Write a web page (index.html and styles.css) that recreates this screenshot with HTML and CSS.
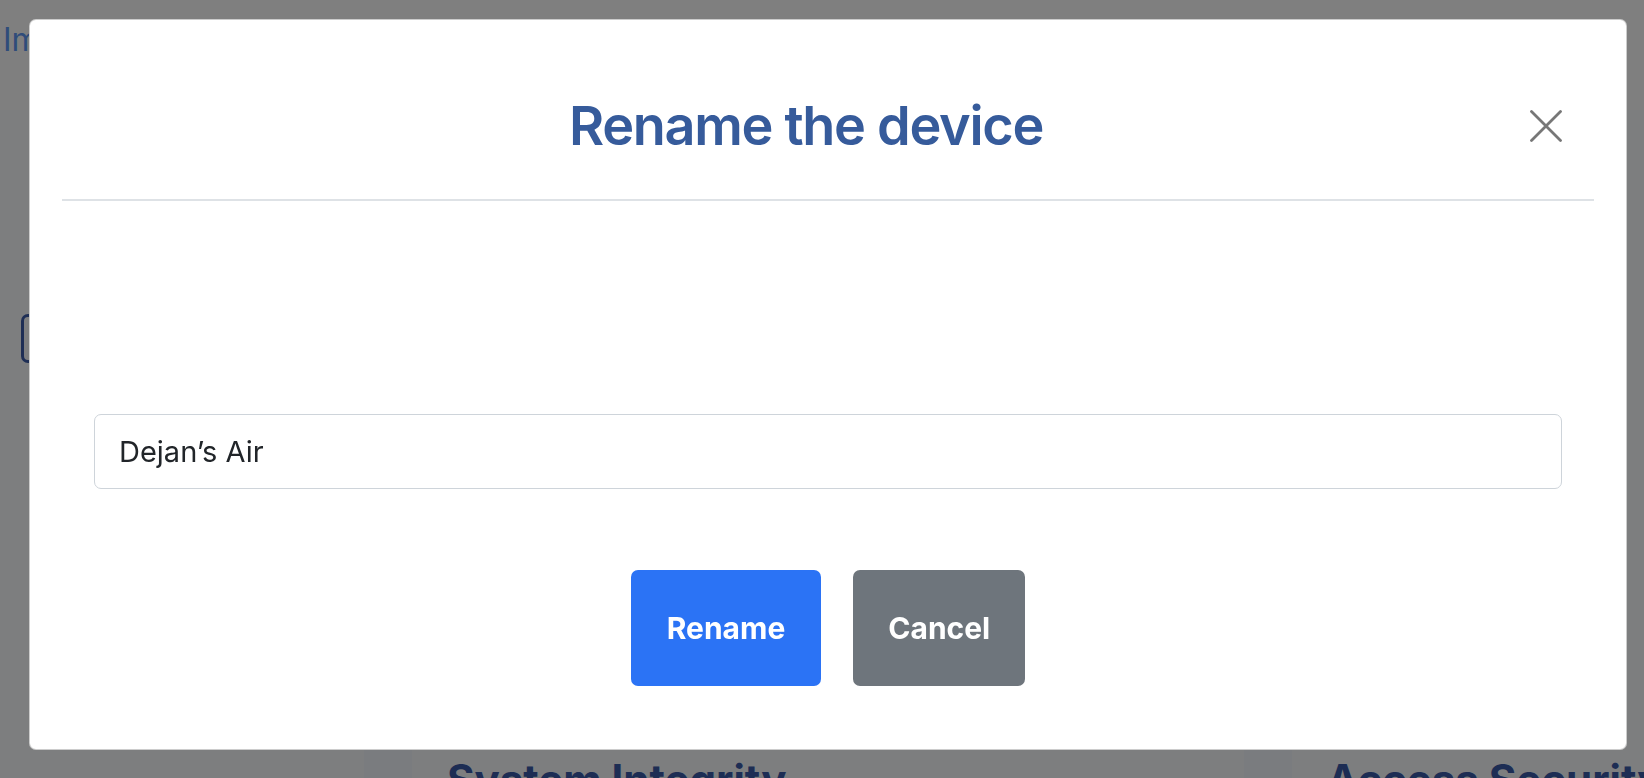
FILE: index.html
```html
<!DOCTYPE html>
<html lang="en">
<head>
<meta charset="utf-8">
<title>Rename the device</title>
<link rel="stylesheet" href="styles.css">
</head>
<body>
<div class="page">
  <header class="topbar"><a class="toplink" href="#">Improve</a></header>
  <div class="main">
    <aside class="side"><span class="side-icon"></span></aside>
    <section class="content">
      <div class="cards">
        <div class="card"><div class="card-icon"></div><h2 class="card-title">System Integrity</h2></div>
        <div class="card"><div class="card-icon"></div><h2 class="card-title">Access Security</h2></div>
      </div>
    </section>
  </div>
</div>
<div class="backdrop">
  <div class="modal" role="dialog" aria-labelledby="modal-title">
    <div class="modal-header">
      <h1 class="modal-title" id="modal-title">Rename the device</h1>
      <button class="close-btn" type="button" aria-label="Close">
        <svg width="32" height="32" viewBox="0 0 32 32" aria-hidden="true"><path d="M1.5 1.5 L30.5 30.5 M30.5 1.5 L1.5 30.5" stroke="#777777" stroke-width="2.8" stroke-linecap="round" fill="none"/></svg>
      </button>
    </div>
    <div class="modal-body">
      <input class="name-input" type="text" value="Dejan’s Air">
    </div>
    <div class="modal-footer">
      <button class="btn btn-primary" type="button">Rename</button>
      <button class="btn btn-secondary" type="button">Cancel</button>
    </div>
  </div>
</div>
</body>
</html>
```

FILE: styles.css
```css
* { box-sizing: border-box; }
html, body { margin: 0; padding: 0; }
body {
  width: 1644px;
  height: 778px;
  overflow: hidden;
  font-family: Inter, "Noto Sans", "Liberation Sans", sans-serif;
  background: #ffffff;
}

/* page behind the dialog */
.page { width: 1644px; height: 778px; display: flex; flex-direction: column; overflow: hidden; }
.topbar { flex: none; height: 110px; background: #ffffff; padding: 21px 0 0 3px; }
.toplink { font-size: 32px; color: #5f98f5; text-decoration: none; line-height: 1.2; }
.main { flex: 1; min-height: 0; display: flex; background: #fbfcff; overflow: hidden; }
.side { flex: none; width: 347px; padding: 204px 0 0 21px; }
.side-icon {
  display: block; width: 34px; height: 49px;
  border: 3px solid #3c5caa; border-radius: 7px;
}
.content { flex: 1; min-width: 0; padding-top: 630px; overflow: hidden; }
.cards { display: flex; }
.card { flex: none; width: 880px; display: flex; align-items: flex-start; padding-left: 17px; gap: 35px; }
.card-icon { width: 48px; height: 70px; background: #f4f8ff; flex: none; }
.card-title { margin: 15px 0 0; font-size: 42px; font-weight: 700; line-height: 1.2; color: #3a5aa8; white-space: nowrap; }

/* dialog */
.backdrop {
  position: fixed; inset: 0;
  background: rgba(0, 0, 0, 0.5);
  padding: 19px 0 0 29px;
}
.modal {
  width: 1598px;
  background: #ffffff;
  border: 1px solid rgba(0, 0, 0, 0.2);
  border-radius: 7px;
}
.modal-header {
  margin: 0 32px;
  padding: 73px 32px 40px 0;
  border-bottom: 2px solid #dee2e6;
  display: flex; align-items: center;
}
.modal-title {
  flex: 1; margin: 0; padding-left: 20px;
  text-align: center;
  font-size: 54px; font-weight: 600; line-height: 66px; letter-spacing: -1.3px;
  color: #365b9b;
}
.close-btn {
  width: 32px; height: 32px; padding: 0; border: 0; background: none;
  display: flex; align-items: center; justify-content: center; cursor: pointer;
}
.modal-body { padding: 213px 64px 0; }
.name-input {
  display: block; width: 100%; height: 75px;
  border: 1px solid #ced4da; border-radius: 7px;
  padding: 0 24px;
  font-family: Inter, "Noto Sans", sans-serif; font-size: 29px; color: #212529;
  background: #ffffff; outline: none;
}
.modal-footer {
  padding: 81px 0 63px;
  display: flex; justify-content: center; gap: 32px;
}
.btn {
  height: 116px; border: 0; border-radius: 7px;
  font-family: Inter, "Noto Sans", sans-serif; font-size: 30px; font-weight: 700;
  color: #ffffff; cursor: pointer;
}
.btn-primary { background: #2b73f5; padding: 0 36px; }
.btn-secondary { background: #6e757c; padding: 0 35px; }
```
